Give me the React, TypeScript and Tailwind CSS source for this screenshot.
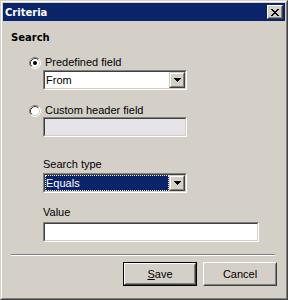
import React from "react";

const FONT = "font-['Liberation_Sans',Arial,sans-serif] text-[11px] leading-[13px]";

function Arrow() {
  return (
    <svg width="7" height="4" viewBox="0 0 7 4" shapeRendering="crispEdges">
      <rect x="0" y="0" width="7" height="1" fill="#000" />
      <rect x="1" y="1" width="5" height="1" fill="#000" />
      <rect x="2" y="2" width="3" height="1" fill="#000" />
      <rect x="3" y="3" width="1" height="1" fill="#000" />
    </svg>
  );
}

function Radio({ checked }: { checked?: boolean }) {
  return (
    <svg width="12" height="12" viewBox="0 0 12 12">
      <circle cx="6" cy="6" r="5" fill="#fff" />
      <path d="M2.11 9.89 A5.5 5.5 0 0 1 9.89 2.11" stroke="#808080" strokeWidth="1" fill="none" />
      <path d="M9.89 2.11 A5.5 5.5 0 0 1 2.11 9.89" stroke="#ffffff" strokeWidth="1" fill="none" />
      <path d="M2.82 9.18 A4.5 4.5 0 0 1 9.18 2.82" stroke="#404040" strokeWidth="1" fill="none" />
      <path d="M9.18 2.82 A4.5 4.5 0 0 1 2.82 9.18" stroke="#d4d0c8" strokeWidth="1" fill="none" />
      {checked && <circle cx="6" cy="6" r="2" fill="#000" />}
    </svg>
  );
}

function Sunken({ w, bg, children }: { w: string; bg: string; children?: React.ReactNode }) {
  return (
    <div className={`${w} h-[20px] border border-t-[#808080] border-l-[#808080] border-b-white border-r-white`}>
      <div className={`h-full flex border border-t-[#404040] border-l-[#404040] border-b-[#d4d0c8] border-r-[#d4d0c8] ${bg}`}>
        {children}
      </div>
    </div>
  );
}

function DropBtn() {
  return (
    <div className="w-[16px] h-full border border-t-[#d4d0c8] border-l-[#d4d0c8] border-b-[#404040] border-r-[#404040]">
      <div className="h-full flex items-center justify-center border border-t-white border-l-white border-b-[#808080] border-r-[#808080] bg-[#d4d0c8]">
        <Arrow />
      </div>
    </div>
  );
}

function Radioline({ checked, label, mt }: { checked?: boolean; label: string; mt: string }) {
  return (
    <div className={`${mt} ml-[18px] h-[13px] flex items-center gap-[4px]`}>
      <Radio checked={checked} />
      <span className="text-black">{label}</span>
    </div>
  );
}

export default function App() {
  return (
    <div className={`${FONT} w-[288px] h-[300px] border border-t-[#d4d0c8] border-l-[#d4d0c8] border-b-[#404040] border-r-[#404040]`}>
      <div className="h-full border border-t-white border-l-white border-b-[#808080] border-r-[#808080]">
        <div className="h-full p-[1px] bg-[#d4d0c8] flex flex-col">
          {/* Title bar */}
          <div className="h-[18px] bg-[#0a246a] flex items-center justify-between pl-[2px] pr-[2px]">
            <span className="font-['DejaVu_Sans',sans-serif] font-bold text-[10px] text-white">Criteria</span>
            <div className="w-[16px] h-[14px] border border-t-white border-l-white border-b-[#404040] border-r-[#404040]">
              <div className="h-full flex items-center justify-center border border-t-[#d4d0c8] border-l-[#d4d0c8] border-b-[#808080] border-r-[#808080] bg-[#d4d0c8]">
                <svg width="8" height="7" viewBox="0 0 8 7" shapeRendering="crispEdges">
                  <rect x="0" y="0" width="2" height="1" fill="#000" />
                  <rect x="6" y="0" width="2" height="1" fill="#000" />
                  <rect x="1" y="1" width="2" height="1" fill="#000" />
                  <rect x="5" y="1" width="2" height="1" fill="#000" />
                  <rect x="2" y="2" width="4" height="1" fill="#000" />
                  <rect x="3" y="3" width="2" height="1" fill="#000" />
                  <rect x="2" y="4" width="4" height="1" fill="#000" />
                  <rect x="1" y="5" width="2" height="1" fill="#000" />
                  <rect x="5" y="5" width="2" height="1" fill="#000" />
                  <rect x="0" y="6" width="2" height="1" fill="#000" />
                  <rect x="6" y="6" width="2" height="1" fill="#000" />
                </svg>
              </div>
            </div>
          </div>

          {/* Content */}
          <div className="flex flex-col pl-[8px] text-black">
            <div className="mt-[10px] h-[13px] font-['DejaVu_Sans',sans-serif] font-bold text-[10px]">Search</div>

            <Radioline checked label="Predefined field" mt="mt-[12px]" />
            <div className="mt-[1px] ml-[32px]">
              <Sunken w="w-[144px]" bg="bg-white">
                <div className="flex-1 pl-[1px] pt-[2px]">From</div>
                <DropBtn />
              </Sunken>
            </div>

            <Radioline label="Custom header field" mt="mt-[14px]" />
            <div className="ml-[32px]">
              <Sunken w="w-[144px]" bg="bg-[#e6e4e8]" />
            </div>

            <div className="mt-[21px] ml-[32px] h-[13px]">Search type</div>
            <div className="mt-[2px] ml-[32px]">
              <Sunken w="w-[144px]" bg="bg-white">
                <div className="flex-1 h-full bg-[#0a246a] border border-dotted border-[#f4eec8] text-white leading-[14px]">
                  Equals
                </div>
                <DropBtn />
              </Sunken>
            </div>

            <div className="mt-[13px] ml-[32px] h-[13px]">Value</div>
            <div className="mt-[3px] ml-[32px]">
              <Sunken w="w-[216px]" bg="bg-white" />
            </div>

            <div className="mt-[12px] mr-[10px]">
              <div className="h-[1px] bg-[#808080]" />
              <div className="h-[1px] bg-white" />
            </div>

            <div className="mt-[6px] pr-[8px] flex justify-end gap-[6px]">
              <div className="w-[74px] h-[24px] border border-black">
                <div className="h-full border border-t-white border-l-white border-b-[#404040] border-r-[#404040]">
                  <div className="h-full flex items-center justify-center border border-t-[#d4d0c8] border-l-[#d4d0c8] border-b-[#808080] border-r-[#808080] bg-[#d4d0c8]">
                    <span><span className="underline">S</span>ave</span>
                  </div>
                </div>
              </div>
              <div className="w-[74px] h-[24px] border border-t-white border-l-white border-b-[#404040] border-r-[#404040]">
                <div className="h-full flex items-center justify-center border border-t-[#d4d0c8] border-l-[#d4d0c8] border-b-[#808080] border-r-[#808080] bg-[#d4d0c8]">
                  Cancel
                </div>
              </div>
            </div>
          </div>
        </div>
      </div>
    </div>
  );
}
